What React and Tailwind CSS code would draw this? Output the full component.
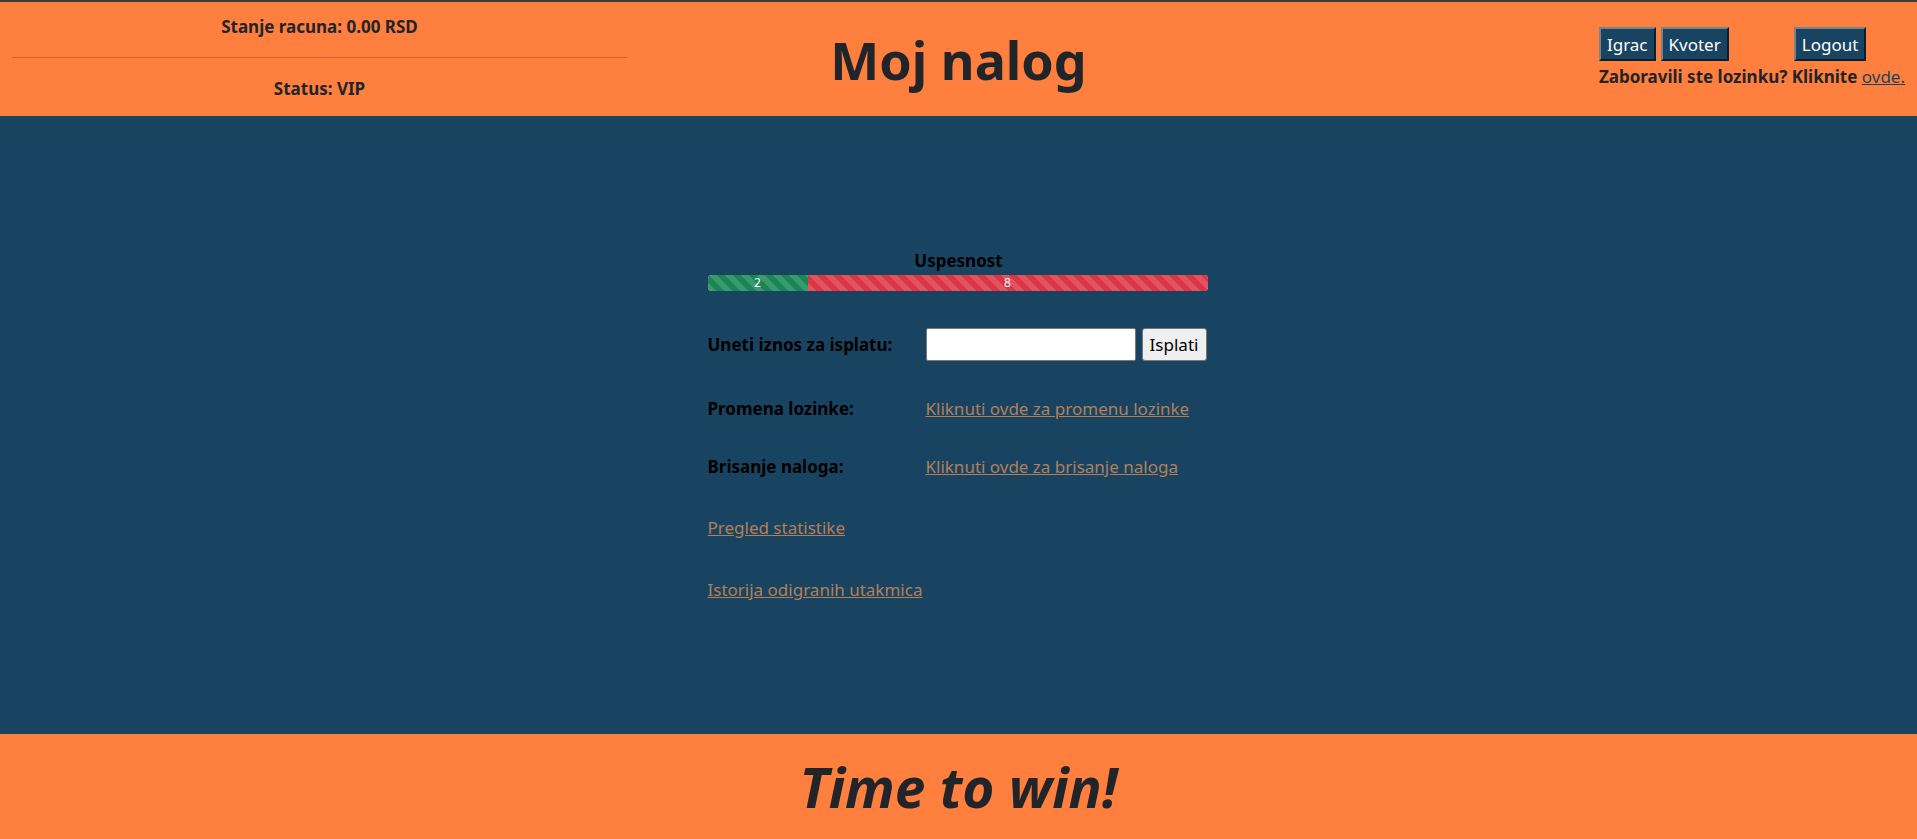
import React from 'react';

const stripes =
  'bg-[linear-gradient(45deg,rgba(255,255,255,.15)_25%,transparent_25%,transparent_50%,rgba(255,255,255,.15)_50%,rgba(255,255,255,.15)_75%,transparent_75%,transparent)] bg-[length:16px_16px]';

const NavButton = ({ children, className = '' }) => (
  <button
    className={`h-[34px] px-[6px] bg-[#184461] text-white text-[17px] leading-none border-2 border-t-[#76838c] border-l-[#76838c] border-b-[#0b1e2b] border-r-[#0b1e2b] ${className}`}
  >
    {children}
  </button>
);

const Row = ({ label, children, className = '' }) => (
  <div className={`flex items-center ${className}`}>
    <div className="w-[218px] font-bold text-black">{label}</div>
    <div className="flex-1">{children}</div>
  </div>
);

const linkCls = 'underline text-[#b47f58]';

const App = () => {
  const won = 2;
  const lost = 8;
  const total = won + lost;

  return (
    <div className="min-h-[839px] flex flex-col font-['Noto_Sans',sans-serif] text-[17px] leading-[24px] text-[#212529]">
      {/* header */}
      <header className="h-[116px] grid grid-cols-3 bg-[#ff7f3f] border-t-2 border-[#3a3a3a]">
        <div className="px-3 pt-[13px] text-center font-bold">
          <p>Stanje racuna: 0.00 RSD</p>
          <hr className="mt-[18px] border-t border-[#c76839]" />
          <p className="mt-[19px]">Status: VIP</p>
        </div>
        <div className="flex items-center justify-center pt-[2px]">
          <h1 className="text-[52px] font-bold leading-[1.2]">Moj nalog</h1>
        </div>
        <div className="px-3 pt-[25px] flex justify-end">
          <div>
            <div className="flex">
              <NavButton>Igrac</NavButton>
              <NavButton className="ml-[5px]">Kvoter</NavButton>
              <NavButton className="ml-[65px]">Logout</NavButton>
            </div>
            <p className="mt-[4px] font-bold whitespace-nowrap">
              Zaboravili ste lozinku? Kliknite{' '}
              <a href="#" className="font-normal underline text-[#184461]">ovde.</a>
            </p>
          </div>
        </div>
      </header>

      {/* main */}
      <main className="h-[618px] bg-[#184461]">
        <div className="w-[502px] mx-auto pt-[133px]">
          <p className="text-center font-bold text-black">Uspesnost</p>
          <div className="mt-[2px] h-[16px] w-[500px] flex rounded-[4px] overflow-hidden bg-[#e9ecef] text-[12px] leading-none text-white">
            <div
              className={`flex items-center justify-center bg-[#198754] ${stripes}`}
              style={{ width: `${(won / total) * 100}%` }}
            >
              {won}
            </div>
            <div
              className={`flex items-center justify-center bg-[#dc3545] ${stripes}`}
              style={{ width: `${(lost / total) * 100}%` }}
            >
              {lost}
            </div>
          </div>

          <Row label="Uneti iznos za isplatu:" className="mt-[37px]">
            <div className="flex items-center gap-[6px]">
              <input
                type="text"
                className="w-[210px] h-[33px] bg-white border border-[#767676] rounded-[2px] px-2"
              />
              <button className="h-[33px] w-[65px] bg-[#efefef] border border-[#767676] rounded-[3px] text-black">
                Isplati
              </button>
            </div>
          </Row>

          <Row label="Promena lozinke:" className="mt-[36px]">
            <a href="#" className={linkCls}>Kliknuti ovde za promenu lozinke</a>
          </Row>

          <Row label="Brisanje naloga:" className="mt-[34px]">
            <a href="#" className={linkCls}>Kliknuti ovde za brisanje naloga</a>
          </Row>

          <div className="mt-[37px]">
            <a href="#" className={linkCls}>Pregled statistike</a>
          </div>

          <div className="mt-[38px]">
            <a href="#" className={linkCls}>Istorija odigranih utakmica</a>
          </div>
        </div>
      </main>

      {/* footer */}
      <footer className="h-[105px] bg-[#ff7f3f] flex items-center justify-center">
        <h2 className="text-[55px] font-bold italic leading-[1.2]">Time to win!</h2>
      </footer>
    </div>
  );
};

export default App;
